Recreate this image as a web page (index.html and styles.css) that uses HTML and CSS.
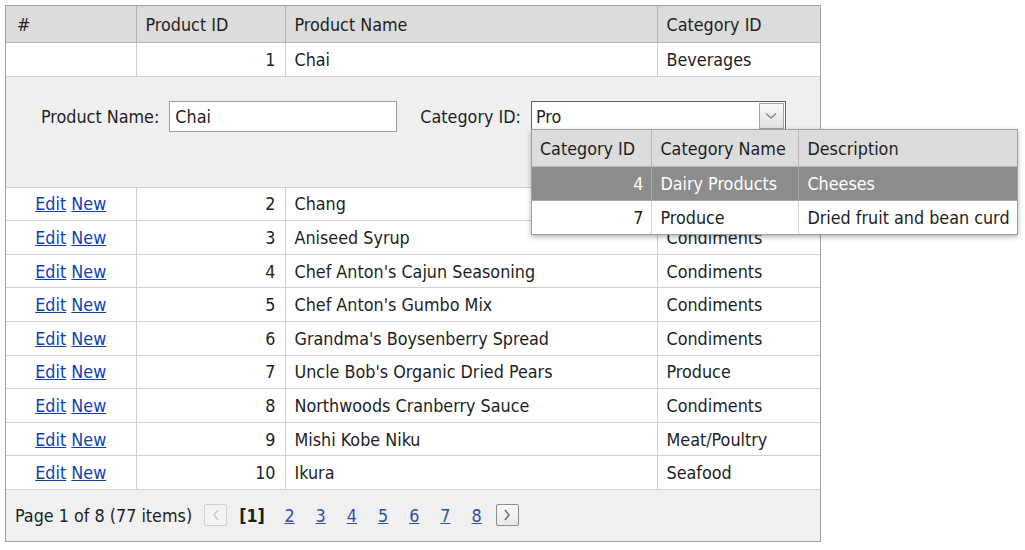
FILE: index.html
```html
<!DOCTYPE html>
<html>
<head>
<meta charset="utf-8">
<link rel="stylesheet" href="styles.css">
</head>
<body>
<div class="grid">
  <table class="main">
    <colgroup>
      <col class="c1"><col class="c2"><col class="c3"><col class="c4">
    </colgroup>
    <thead>
      <tr><th>#</th><th>Product ID</th><th>Product Name</th><th>Category ID</th></tr>
    </thead>
    <tbody>
      <tr><td></td><td class="num">1</td><td>Chai</td><td>Beverages</td></tr>
      <tr class="editrow"><td colspan="4">
        <div class="form">
          <label class="lbl">Product Name:</label>
          <div class="textbox">Chai</div>
          <label class="lbl lbl2">Category ID:</label>
          <div class="combo">
            <span class="combo-text">Pro</span>
            <span class="combo-btn"><svg width="12" height="8" viewBox="0 0 12 8"><path d="M1 1.5 L6 6 L11 1.5" fill="none" stroke="#8a8a8a" stroke-width="1.6"/></svg></span>
            <div class="dropdown">
              <table class="dd">
                <colgroup><col class="d1"><col class="d2"><col class="d3"></colgroup>
                <thead><tr><th>Category ID</th><th>Category Name</th><th>Description</th></tr></thead>
                <tbody>
                  <tr class="sel"><td class="num">4</td><td>Dairy Products</td><td>Cheeses</td></tr>
                  <tr><td class="num">7</td><td>Produce</td><td>Dried fruit and bean curd</td></tr>
                </tbody>
              </table>
            </div>
          </div>
        </div>
      </td></tr>
      <tr><td class="cmd"><a href="#">Edit</a> <a href="#">New</a></td><td class="num">2</td><td>Chang</td><td>Beverages</td></tr>
      <tr><td class="cmd"><a href="#">Edit</a> <a href="#">New</a></td><td class="num">3</td><td>Aniseed Syrup</td><td>Condiments</td></tr>
      <tr><td class="cmd"><a href="#">Edit</a> <a href="#">New</a></td><td class="num">4</td><td>Chef Anton's Cajun Seasoning</td><td>Condiments</td></tr>
      <tr><td class="cmd"><a href="#">Edit</a> <a href="#">New</a></td><td class="num">5</td><td>Chef Anton's Gumbo Mix</td><td>Condiments</td></tr>
      <tr><td class="cmd"><a href="#">Edit</a> <a href="#">New</a></td><td class="num">6</td><td>Grandma's Boysenberry Spread</td><td>Condiments</td></tr>
      <tr><td class="cmd"><a href="#">Edit</a> <a href="#">New</a></td><td class="num">7</td><td>Uncle Bob's Organic Dried Pears</td><td>Produce</td></tr>
      <tr><td class="cmd"><a href="#">Edit</a> <a href="#">New</a></td><td class="num">8</td><td>Northwoods Cranberry Sauce</td><td>Condiments</td></tr>
      <tr><td class="cmd"><a href="#">Edit</a> <a href="#">New</a></td><td class="num">9</td><td>Mishi Kobe Niku</td><td>Meat/Poultry</td></tr>
      <tr><td class="cmd"><a href="#">Edit</a> <a href="#">New</a></td><td class="num">10</td><td>Ikura</td><td>Seafood</td></tr>
    </tbody>
  </table>
  <div class="pager">
    <span class="summary">Page 1 of 8 (77 items)</span>
    <span class="pbtn disabled"><svg width="8" height="12" viewBox="0 0 8 12"><path d="M6 1 L2 6 L6 11" fill="none" stroke="#c8c8c8" stroke-width="1.5"/></svg></span>
    <b class="cur">[1]</b>
    <a href="#">2</a><a href="#">3</a><a href="#">4</a><a href="#">5</a><a href="#">6</a><a href="#">7</a><a href="#">8</a>
    <span class="pbtn"><svg width="8" height="12" viewBox="0 0 8 12"><path d="M2 1 L6 6 L2 11" fill="none" stroke="#6a6a6a" stroke-width="1.5"/></svg></span>
  </div>
</div>
</body>
</html>
```

FILE: styles.css
```css
html, body { margin: 0; padding: 0; background: #fff; }
body {
  font-family: "DejaVu Sans Condensed", "DejaVu Sans", sans-serif;
  font-size: 17.8px;
  color: #1e1e1e;
  padding: 5px;
}
.grid {
  width: 814px;
  border: 1px solid #a0a0a0;
  background: #fff;
}
table { border-collapse: collapse; }
.main { width: 100%; table-layout: fixed; }
.c1 { width: 130px; }
.c2 { width: 149px; }
.c3 { width: 372px; }
.c4 { width: 163px; }
.main > thead > tr > th {
  background: #dcdcdc;
  font-weight: normal;
  text-align: left;
  height: 36px;
  padding: 0 9px;
  border-left: 1px solid #b4b4b4;
  border-bottom: 1px solid #b4b4b4;
  white-space: nowrap;
}
.main > thead > tr > th:first-child { border-left: none; padding-left: 11px; }
.main > tbody > tr > td {
  height: 32.6px;
  padding: 0 9px;
  border-left: 1px solid #d0d0d0;
  border-bottom: 1px solid #d0d0d0;
  white-space: nowrap;
}
.main > tbody > tr > td:first-child { border-left: none; }
.num { text-align: right; }
.main .cmd { text-align: center; padding: 0; }
.cmd a { color: #0f3fb4; text-decoration: underline; }
.main > tbody > tr.editrow > td {
  background: #efefef;
  height: 110px;
  padding: 0;
  vertical-align: top;
}
.form {
  display: flex;
  align-items: center;
  padding: 24px 0 0 35px;
}
.lbl { margin-right: 10px; }
.lbl2 { margin-left: 23px; }
.textbox {
  box-sizing: border-box;
  width: 228px;
  height: 31px;
  border: 1px solid #a0a0a0;
  background: #fff;
  padding: 0 5px;
  line-height: 29px;
}
.combo {
  position: relative;
  box-sizing: border-box;
  width: 255px;
  height: 30px;
  border: 1px solid #606060;
  background: #fff;
  display: flex;
  align-items: center;
}
.combo-text { flex: 1; padding-left: 4px; }
.combo-btn {
  box-sizing: border-box;
  width: 25px;
  height: 26px;
  margin-right: 1px;
  border: 1px solid #a4a4a4;
  background: linear-gradient(#f8f8f8, #e2e2e2);
  display: flex;
  align-items: center;
  justify-content: center;
}
.dropdown {
  position: absolute;
  left: -1px;
  top: 27px;
  border: 1px solid #a0a0a0;
  background: #fff;
  box-shadow: 0 2px 5px rgba(0,0,0,0.3);
  z-index: 10;
}
.dd { table-layout: fixed; width: 485px; }
.d1 { width: 120px; }
.d2 { width: 147px; }
.d3 { width: 218px; }
.dd th {
  background: #dcdcdc;
  font-weight: normal;
  text-align: left;
  height: 36px;
  padding: 0 8px;
  border-left: 1px solid #b8b8b8;
  border-bottom: 1px solid #b8b8b8;
  white-space: nowrap;
}
.dd td {
  height: 33px;
  padding: 0 8px;
  border-left: 1px solid #d4d4d4;
  border-bottom: 1px solid #d4d4d4;
  white-space: nowrap;
  background: #fff;
}
.dd th:first-child, .dd td:first-child { border-left: none; }
.dd tr:last-child td { border-bottom: none; }
.dd .sel td { background: #8c8c8c; color: #fff; border-color: #a8a8a8; }
.pager {
  background: #f0f0f0;
  height: 51px;
  display: flex;
  align-items: center;
  padding-left: 9px;
}
.summary { margin-right: 12px; }
.pbtn {
  box-sizing: border-box;
  width: 23px;
  height: 22px;
  border: 1px solid #8c8c8c;
  border-radius: 2px;
  background: linear-gradient(#fafafa, #e8e8e8);
  display: inline-flex;
  align-items: center;
  justify-content: center;
}
.pbtn.disabled { border-color: #d0d0d0; background: #f4f4f4; }
.cur { margin: 0 9px 0 12px; }
.pager a {
  color: #2d4fa5;
  text-decoration: underline;
  margin: 0 10.5px;
}
.pager a:last-of-type { margin-right: 14px; }
```
